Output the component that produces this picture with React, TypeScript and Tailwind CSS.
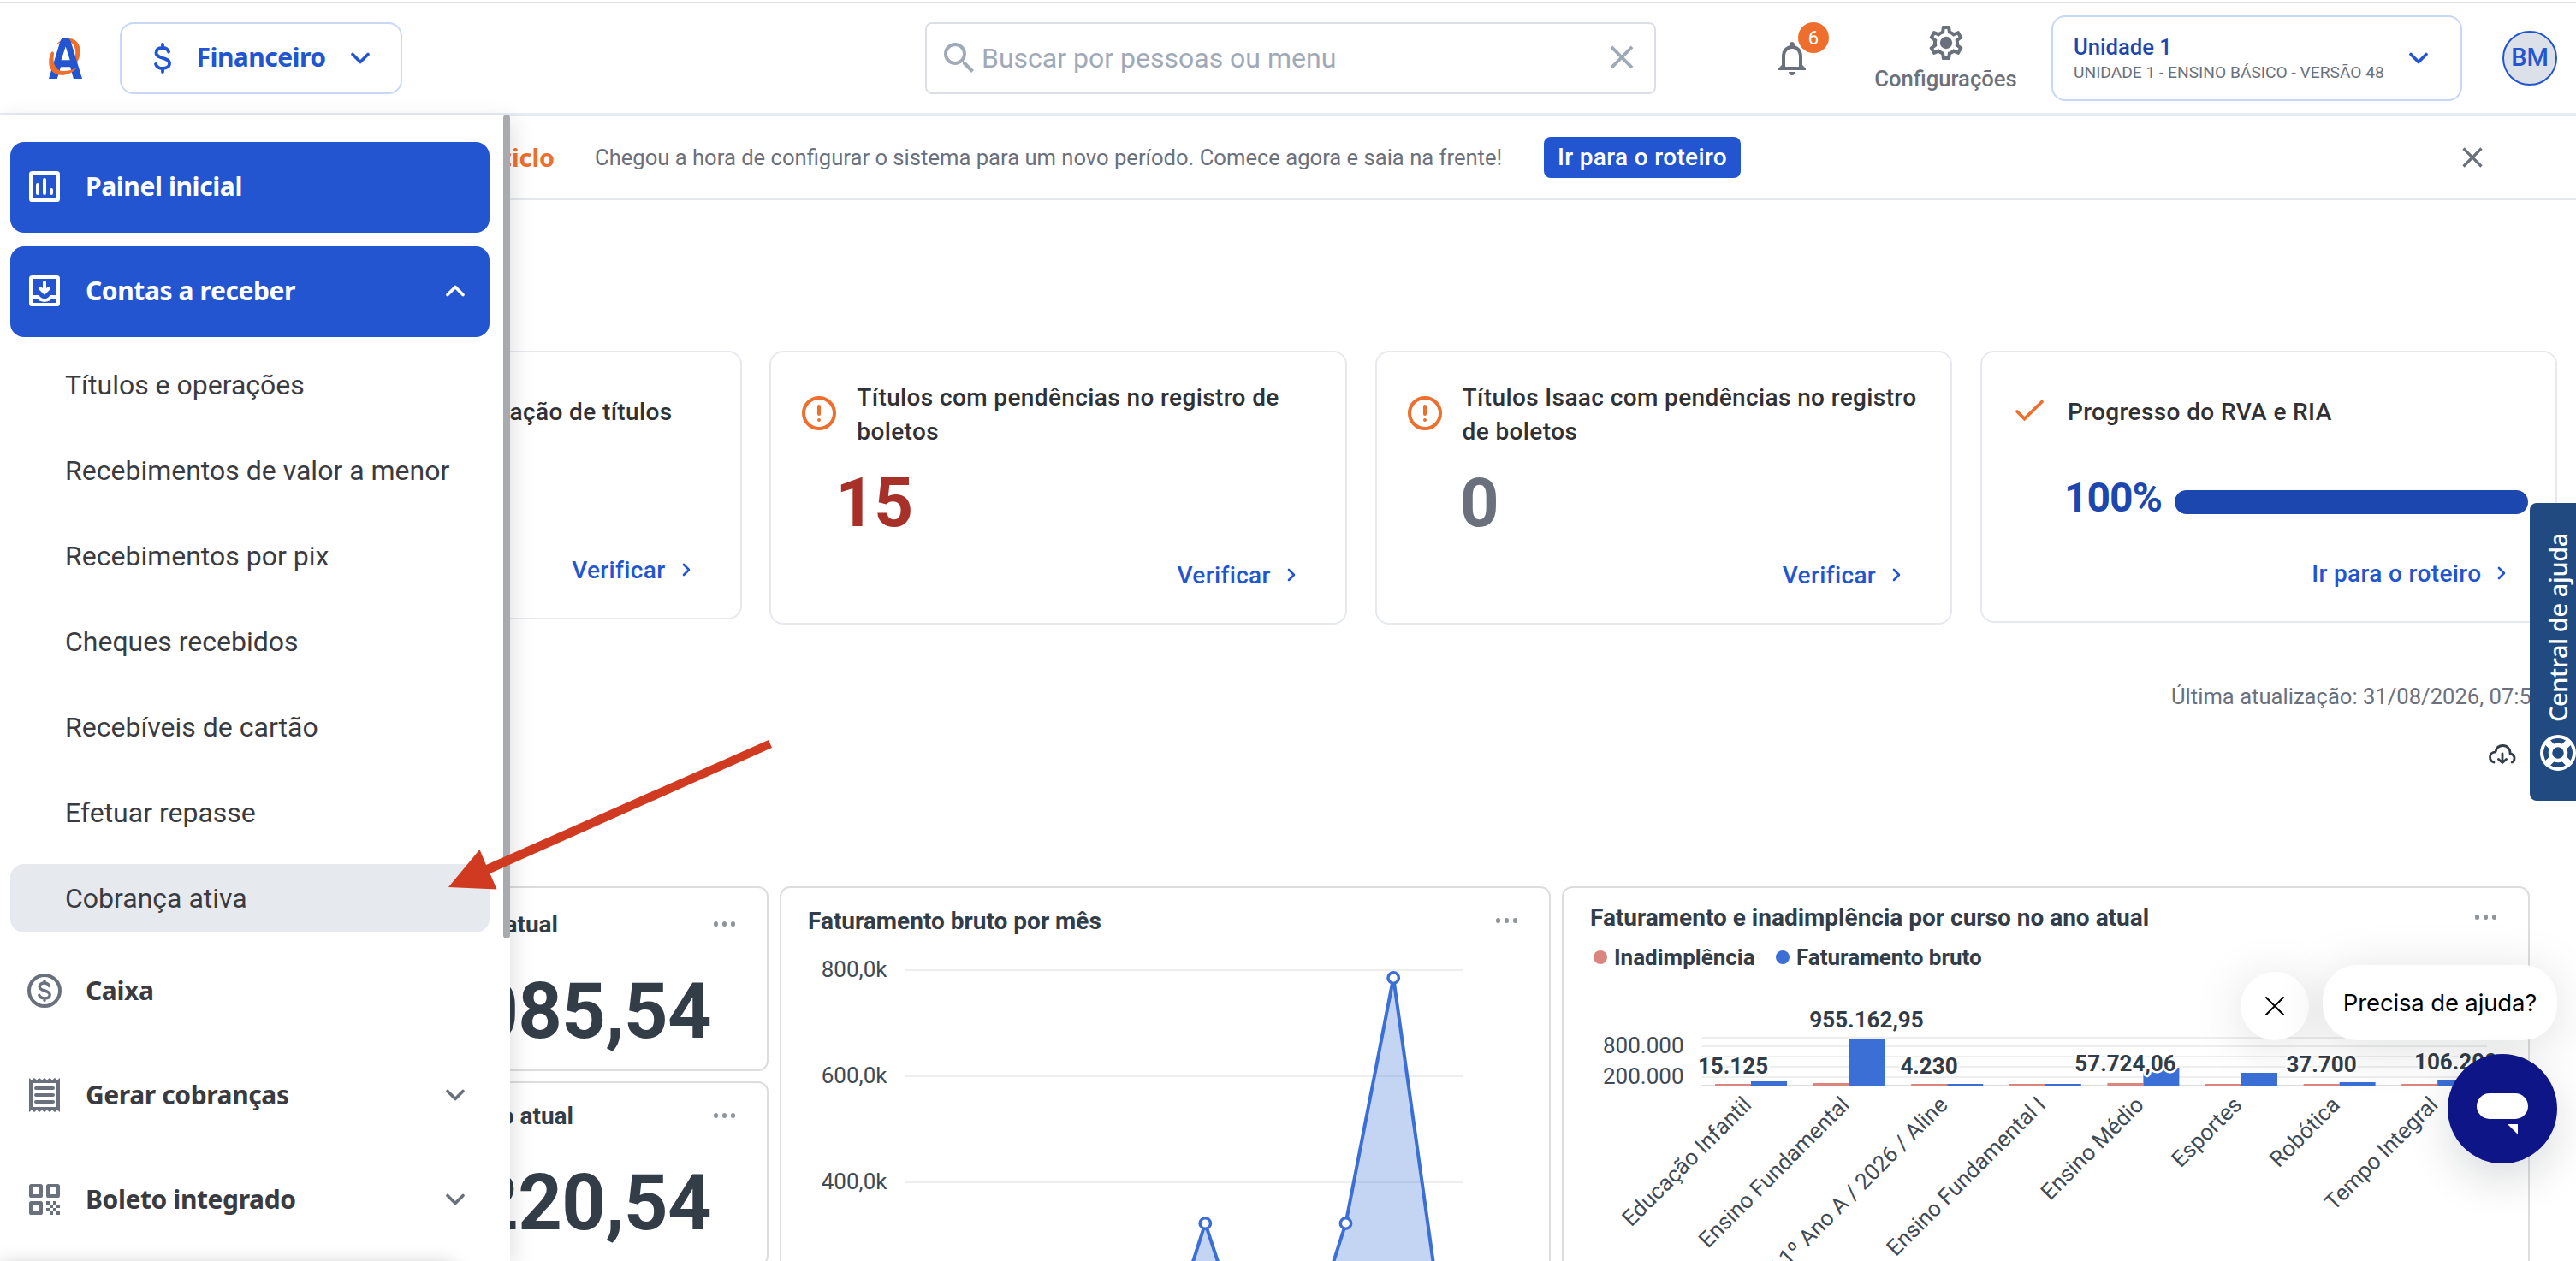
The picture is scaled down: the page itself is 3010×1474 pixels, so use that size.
import React from 'react';
import { MdClose, MdNotificationsNone, MdSearch } from 'react-icons/md';

const SUB_ITEMS = [
  'Títulos e operações',
  'Recebimentos de valor a menor',
  'Recebimentos por pix',
  'Cheques recebidos',
  'Recebíveis de cartão',
  'Efetuar repasse',
  'Cobrança ativa',
];

const MONTHLY = [
  { x: 440.4, y: 506 },
  { x: 495.3, y: 334 },
  { x: 550, y: 500 },
  { x: 604.8, y: 506 },
  { x: 659.5, y: 334 },
  { x: 715.2, y: 47 },
  { x: 770, y: 439 },
];

const COURSES = [
  { name: 'Educação Infantil', overdue: 2, gross: 5, label: '15.125', labelX: 198, labelY: 120 },
  { name: 'Ensino Fundamental', overdue: 3, gross: 54, label: '955.162,95', labelX: 354, labelY: 66 },
  { name: 'Ensino Fundamental / 1º Ano A / 2026 / Aline', overdue: 2, gross: 2, label: '4.230', labelX: 427, labelY: 120 },
  { name: 'Ensino Fundamental I', overdue: 2, gross: 2, label: '', labelX: 0, labelY: 0 },
  { name: 'Ensino Médio', overdue: 3, gross: 21, label: '57.724,06', labelX: 656.5, labelY: 117 },
  { name: 'Esportes', overdue: 2, gross: 15, label: '', labelX: 0, labelY: 0 },
  { name: 'Robótica', overdue: 2, gross: 4, label: '37.700', labelX: 885.5, labelY: 118 },
  { name: 'Tempo Integral', overdue: 2, gross: 6, label: '106.200', labelX: 1042.5, labelY: 115 },
];

const GEAR_PATH =
  'M19.43 12.98c.04-.32.07-.64.07-.98 0-.34-.03-.66-.07-.98l2.11-1.65c.19-.15.24-.42.12-.64l-2-3.46c-.09-.16-.26-.25-.44-.25-.06 0-.12.01-.17.03l-2.49 1c-.52-.4-1.08-.73-1.69-.98l-.38-2.65C14.46 2.18 14.25 2 14 2h-4c-.25 0-.46.18-.49.42l-.38 2.65c-.61.25-1.17.59-1.69.98l-2.49-1c-.06-.02-.12-.03-.18-.03-.17 0-.34.09-.43.25l-2 3.46c-.13.22-.07.49.12.64l2.11 1.65c-.04.32-.07.65-.07.98 0 .33.03.66.07.98l-2.11 1.65c-.19.15-.24.42-.12.64l2 3.46c.09.16.26.25.44.25.06 0 .12-.01.17-.03l2.49-1c.52.4 1.08.73 1.69.98l.38 2.65c.03.24.24.42.49.42h4c.25 0 .46-.18.49-.42l.38-2.65c.61-.25 1.17-.59 1.69-.98l2.49 1c.06.02.12.03.18.03.17 0 .34-.09.43-.25l2-3.46c.12-.22.07-.49-.12-.64l-2.11-1.65zm-1.98-1.71c.04.31.05.52.05.73 0 .21-.02.43-.05.73l-.14 1.13.89.7 1.08.84-.7 1.21-1.27-.51-1.04-.42-.9.68c-.43.32-.84.56-1.25.73l-1.06.43-.16 1.13-.2 1.35h-1.4l-.19-1.35-.16-1.13-1.06-.43c-.43-.18-.83-.41-1.23-.71l-.91-.7-1.06.43-1.27.51-.7-1.21 1.08-.84.89-.7-.14-1.13c-.03-.31-.05-.54-.05-.74s.02-.43.05-.73l.14-1.13-.89-.7-1.08-.84.7-1.21 1.27.51 1.04.42.9-.68c.43-.32.84-.56 1.25-.73l1.06-.43.16-1.13.2-1.35h1.39l.19 1.35.16 1.13 1.06.43c.43.18.83.41 1.23.71l.91.7 1.06-.43 1.27-.51.7 1.21-1.07.85-.89.7.14 1.13z';

const Chevron: React.FC<{ className?: string }> = ({ className = '' }) => (
  <svg viewBox="0 0 24 14" className={`h-[14px] w-[24px] shrink-0 ${className}`} fill="none" stroke="currentColor" strokeWidth="3.6" strokeLinecap="round" strokeLinejoin="round">
    <path d="M3 2.5l9 9 9-9" />
  </svg>
);

const SmallChevron = () => (
  <svg viewBox="0 0 10 16" className="h-4 w-[10px]" fill="none" stroke="currentColor" strokeWidth="2.6" strokeLinecap="round" strokeLinejoin="round">
    <path d="M2 2l6 6-6 6" />
  </svg>
);

const AlertIcon = () => (
  <svg viewBox="0 0 48 48" className="mb-0.5 h-12 w-12 shrink-0" fill="none" stroke="#ee6f2d" strokeWidth="4" strokeLinecap="round">
    <circle cx="24" cy="24" r="18" />
    <path d="M24 16v9M24 32v.1" />
  </svg>
);

const Dots = () => (
  <div className="flex gap-[4.5px]">
    <span className="h-[5.5px] w-[5.5px] rounded-full bg-[#8f959b]" />
    <span className="h-[5.5px] w-[5.5px] rounded-full bg-[#8f959b]" />
    <span className="h-[5.5px] w-[5.5px] rounded-full bg-[#8f959b]" />
  </div>
);

const Logo = () => (
  <svg viewBox="0 0 40 48" className="h-12 w-10 shrink-0">
    <path d="M7.500 9.500C12 3 19 .5 24.500 1c8 .5 12.500 7.500 12.200 16-.2 4.500-1.500 8.500-3.500 11.500l-4-2c2-4 2.300-8 1.800-12-1-6-5-10.500-11-10.500-4.500 0-8.500 2-12.500 5.500z" fill="#ee6f2d" />
    <path d="M0 48L13.300 4.500C14.300 1.500 16.500 0 19.500 0s5.200 1.500 6.200 4.500L39 48H28.900l-3.900-13.700H14L9.800 48zM14.500 26.300h10.200L19.700 10.500z" fill="#2255cf" fillRule="evenodd" />
    <path d="M2.700 17.500c1-1.700 3.300-1 3.300.8 0 3-.8 5.700-.3 9.200.8 6.500 4.300 11 10.300 11.500 6 .3 11-1 16.500-3.500-5 6-12 8.800-19 8.300C5 43.200.2 36.500.2 28.500c0-4 .8-8 2.500-11z" fill="#ee6f2d" />
  </svg>
);

const TopBar = () => (
  <header className="flex h-[130px] items-center border-b-2 border-[#e6edf8] pl-[57px]">
    <Logo />
    <button className="ml-[43px] flex h-[84px] w-[330px] items-center rounded-[16px] border-2 border-[#c7d7f5] pl-[38px] text-[#2255cf]">
      <svg viewBox="0 0 20 36" className="h-9 w-5" fill="none" stroke="currentColor" strokeWidth="3.8" strokeLinecap="round">
        <path d="M10 2v4M10 30v4M17 10.500c-1-3-3.500-4.500-7-4.500-4.500 0-7.500 2-7.500 5.800 0 8 15.500 4.200 15.500 12.500 0 3.700-3.500 5.700-8 5.700-4 0-7-1.800-8-5" />
      </svg>
      <span className="mb-0.5 ml-[29px] w-[152px] whitespace-nowrap font-['Noto_Sans'] text-[30px] leading-[40px] font-bold tracking-[-0.55px]">Financeiro</span>
      <Chevron className="ml-[28px]" />
    </button>
    <div className="ml-[611px] flex h-[84px] w-[854px] items-center rounded-lg border-2 border-[#dce0e6] pl-[14px] text-[#a0a9b8]">
      <MdSearch className="h-12 w-12" />
      <span className="ml-0.5 text-[32px] leading-[40px]">Buscar por pessoas ou menu</span>
      <MdClose className="mr-[15px] mb-0.5 ml-auto h-[46px] w-[46px]" />
    </div>
    <div className="relative ml-[135px] h-12 w-12 text-[#6b717c]">
      <MdNotificationsNone className="h-12 w-12" />
      <span className="absolute -top-[18px] left-[31px] flex h-9 w-9 items-center justify-center rounded-full bg-[#ee6f2d] text-[22px] text-white">6</span>
    </div>
    <div className="mb-0.5 ml-[72px] flex w-[167px] flex-col items-center text-[#6b717c]">
      <svg viewBox="0 0 24 24" className="h-12 w-12" fill="currentColor">
        <path d={GEAR_PATH} />
        <circle cx="12" cy="12" r="3.600" />
      </svg>
      <span className="mt-0.5 text-[25.6px] leading-8 font-medium">Configurações</span>
    </div>
    <div className="ml-[40px] flex h-[100px] w-[480px] shrink-0 items-center rounded-[16px] border-2 border-[#c7d7f5] pl-[24px]">
      <div className="w-[363px] whitespace-nowrap">
        <p className="text-[25.6px] leading-[34px] font-medium text-[#1c47ae]">Unidade 1</p>
        <p className="text-[19.2px] leading-[26px] text-[#6b717c]">UNIDADE 1 - ENSINO BÁSICO - VERSÃO 48</p>
      </div>
      <Chevron className="ml-[28px] text-[#2255cf]" />
    </div>
    <div className="ml-[47px] flex h-16 w-16 shrink-0 items-center justify-center rounded-full border-2 border-[#2255cf] bg-[#dce1e9] text-[29px] font-medium text-[#2255cf]">BM</div>
  </header>
);

const NavItem: React.FC<{ icon: React.ReactNode; label: string; active?: boolean; arrow?: 'up' | 'down' }> = ({ icon, label, active, arrow }) => (
  <div className={`flex h-[106px] items-center rounded-[16px] pb-0.5 pl-4 ${active ? 'bg-[#2255cf] text-white' : 'text-[#6b717c]'}`}>
    {icon}
    <span className={`ml-6 font-['Noto_Sans'] text-[30px] leading-[44px] font-bold tracking-[-0.4px] ${active ? '' : 'text-[#3a3b40]'}`}>{label}</span>
    {arrow && <Chevron className={`mr-[28px] ml-auto ${arrow === 'up' ? 'rotate-180' : ''}`} />}
  </div>
);

const iconProps = { viewBox: '0 0 24 24', className: 'h-12 w-12 shrink-0', fill: 'none', stroke: 'currentColor', strokeLinecap: 'round' as const };

const Sidebar = () => (
  <aside className="absolute top-[134px] left-0 z-10 h-[1340px] w-[596px] overflow-visible bg-white shadow-[4px_6px_24px_rgba(0,0,0,0.12)]">
    <nav className="flex w-[584px] flex-col gap-4 pt-8 pr-3 pl-3">
      <NavItem
        active
        label="Painel inicial"
        icon={
          <svg {...iconProps} strokeWidth="2">
            <rect x="4" y="4" width="16" height="16" rx="0.800" />
            <path d="M8 11v5M12 8v8M16 14v2" />
          </svg>
        }
      />
      <NavItem
        active
        arrow="up"
        label="Contas a receber"
        icon={
          <svg {...iconProps} strokeWidth="2">
            <rect x="4" y="4" width="16" height="16" rx="0.800" />
            <path d="M12 7v5.500M9.500 10.500L12 13l2.500-2.500M4 15.500h4.200c.8 1.200 2.200 2 3.800 2s3-.8 3.800-2H20" />
          </svg>
        }
      />
      <ul className="flex flex-col gap-5">
        {SUB_ITEMS.map(item => (
          <li
            key={item}
            className={`flex h-20 items-center rounded-[16px] pl-16 text-[32px] text-[#3a3b40] ${item === 'Cobrança ativa' ? 'bg-[#e6e9ee]' : ''}`}
          >
            {item}
          </li>
        ))}
      </ul>
      <NavItem
        label="Caixa"
        icon={
          <svg {...iconProps} strokeWidth="2">
            <circle cx="12" cy="12" r="9" />
            <path strokeWidth="1.700" d="M12 6.300v1.200M12 16.500v1.200M14.800 9.300c-.5-1.200-1.500-1.800-2.800-1.800-1.700 0-2.900.8-2.900 2.100 0 3.100 6 1.700 6 4.800 0 1.400-1.400 2.100-3.100 2.100-1.500 0-2.600-.7-3.100-1.900" />
          </svg>
        }
      />
      <NavItem
        arrow="down"
        label="Gerar cobranças"
        icon={
          <svg {...iconProps} strokeWidth="2">
            <path d="M4 4v16M20 4v16M4 4h16M4 20h16" strokeLinecap="butt" />
            <path d="M3 5V2l1.500 1.200L6 2l1.500 1.200L9 2l1.500 1.200L12 2l1.500 1.200L15 2l1.500 1.200L18 2l1.500 1.200L21 2v3zM3 19v3l1.500-1.200L6 22l1.500-1.200L9 22l1.500-1.200L12 22l1.500-1.200L15 22l1.500-1.200L18 22l1.500-1.200L21 22v-3z" fill="currentColor" stroke="none" />
            <path d="M7 8h10M7 12h10M7 16h10" />
          </svg>
        }
      />
      <NavItem
        arrow="down"
        label="Boleto integrado"
        icon={
          <svg {...iconProps} strokeWidth="2">
            <rect x="4" y="4" width="6" height="6" rx="0.300" />
            <rect x="14" y="4" width="6" height="6" rx="0.300" />
            <rect x="4" y="14" width="6" height="6" rx="0.300" />
            <path
              fill="currentColor"
              stroke="none"
              d="M13 13h2v2h-2zM17 13h2v2h-2zM15 15h2v2h-2zM19 15h2v2h-2zM13 17h2v2h-2zM17 17h2v2h-2zM15 19h2v2h-2zM19 19h2v2h-2z"
            />
          </svg>
        }
      />
    </nav>
    <div className="absolute top-0 right-0 h-[963px] w-2 rounded-full bg-[#a9aaad]" />
    <div className="absolute bottom-0 left-0 h-[24px] w-[560px] overflow-hidden">
      <div className="mt-[28px] h-10 w-[530px] shadow-[0_0_22px_rgba(0,0,0,0.22)]" />
    </div>
  </aside>
);

const Banner = () => (
  <div className="flex h-[100px] items-center border-y-2 border-[#e5e9ee]">
    <span className="w-[648px] text-right font-['Noto_Sans'] text-[29px] font-bold tracking-[-0.1px] text-[#ee6f2d]">Novo ciclo</span>
    <span className="ml-[47px] w-[1062px] text-[25.6px] whitespace-nowrap text-[#6b717c]">
      Chegou a hora de configurar o sistema para um novo período. Comece agora e saia na frente!
    </span>
    <button className="ml-[47px] h-12 w-[230px] rounded-lg bg-[#2255cf] text-[28px] leading-[48px] font-medium tracking-[0.35px] whitespace-nowrap text-white">
      Ir para o roteiro
    </button>
    <MdClose className="mr-[101px] ml-auto h-10 w-10 text-[#6b717c]" />
  </div>
);

interface StatusCardProps {
  icon: React.ReactNode;
  title: string;
  tall?: boolean;
  link: string;
  children?: React.ReactNode;
}

const StatusCard: React.FC<StatusCardProps> = ({ icon, title, tall, link, children }) => (
  <div className="flex w-[674.5px] shrink-0 flex-col rounded-[16px] border-2 border-[#e6e9ee] pt-8 pb-9 pl-8">
    <div className={`flex items-center ${tall ? 'h-20' : 'h-[74px]'}`}>
      {icon}
      <h3 className="ml-5 w-[550px] pt-0.5 text-[28px] leading-10 font-medium tracking-[0.38px] text-[#303134]">{title}</h3>
    </div>
    <div className="mt-6">{children}</div>
    <a className="mt-6 flex h-10 items-center justify-end gap-[19px] pr-[58px] text-[28px] leading-10 font-medium tracking-[0.35px] text-[#2255cf]">
      <span className="pt-px">{link}</span>
      <SmallChevron />
    </a>
  </div>
);

const StatusCards = () => (
  <section className="mt-[176px] flex h-[320px] items-start gap-[32.8px] pl-[192px]">
    <StatusCard icon={<AlertIcon />} title="Pendência em renegociação de títulos" link="Verificar">
      <div className="h-20" />
    </StatusCard>
    <StatusCard icon={<AlertIcon />} title="Títulos com pendências no registro de boletos" tall link="Verificar">
      <p className="ml-[39px] w-[98px] text-center text-[80px] leading-[80px] font-bold tracking-[-0.8px] text-[#a73028]">15</p>
    </StatusCard>
    <StatusCard icon={<AlertIcon />} title="Títulos Isaac com pendências no registro de boletos" tall link="Verificar">
      <p className="ml-[39px] w-[98px] text-center text-[80px] leading-[80px] font-bold text-[#6b717c]">0</p>
    </StatusCard>
    <StatusCard
      icon={
        <svg viewBox="0 0 48 48" className="h-12 w-12 shrink-0" fill="none" stroke="#ee6f2d" strokeWidth="3.800" strokeLinecap="round">
          <path d="M9 24l8.500 8.500L38 12.500" />
        </svg>
      }
      title="Progresso do RVA e RIA"
      link="Ir para o roteiro"
    >
      <div className="flex h-[84px] items-center pl-[64px]">
        <span className="w-[116px] pb-1 text-[48px] leading-[80px] font-bold tracking-[-1px] text-[#1c47ae]">100%</span>
        <div className="mt-[6px] ml-[13px] h-7 w-[413px] rounded-[14px] bg-[#1c47ae]" />
      </div>
    </StatusCard>
  </section>
);

const MonthlyChart = () => {
  const line = MONTHLY.map(p => `${p.x},${p.y}`).join(' ');
  return (
    <svg viewBox="0 0 897 384" className="h-[384px] w-[897px]">
      {['800,0k', '600,0k', '400,0k'].map((label, i) => (
        <g key={label}>
          <line x1="144.500" x2="796.500" y1={38 + i * 124} y2={38 + i * 124} stroke="#eeeeee" strokeWidth="2" />
          <text x="123.500" y={46 + i * 124} textAnchor="end" fontSize="26" fill="#3f4a54">
            {label}
          </text>
        </g>
      ))}
      <polygon points={`440,560 ${line} 770,560`} fill="#3b6fd6" fillOpacity="0.300" />
      <polyline points={line} fill="none" stroke="#3b6fd6" strokeWidth="4" />
      {MONTHLY.map(p => (
        <circle key={p.x} cx={p.x} cy={p.y} r="6.200" fill="#fff" stroke="#3b6fd6" strokeWidth="3.500" />
      ))}
    </svg>
  );
};

const CourseChart = () => (
  <svg viewBox="0 0 1127 345" className="h-[345px] w-[1127px] overflow-hidden">
    {[78, 88, 100, 112, 124].map(y => (
      <line key={y} x1="161.500" x2="1079" y1={y} y2={y} stroke="#eeeeee" strokeWidth="2" />
    ))}
    <line x1="161.500" x2="1079" y1="134" y2="134" stroke="#dcdcdc" strokeWidth="2" />
    <text x="140.500" y="96" textAnchor="end" fontSize="26" fill="#3f4a54">800.000</text>
    <text x="140.500" y="132" textAnchor="end" fontSize="26" fill="#3f4a54">200.000</text>
    {COURSES.map((c, i) => {
      const x = 177 + i * 114.6;
      return (
        <g key={c.name}>
          <rect x={x} y={134 - c.overdue} width="42" height={c.overdue + 0.5} fill="#db857f" />
          <rect x={x + 42} y={134 - c.gross} width="42" height={c.gross + 0.5} fill="#3b6fd6" />
          <text transform={`translate(${x + 44} 158) rotate(-45)`} textAnchor="end" fontSize="26" fill="#3f4a54">
            {c.name}
          </text>
        </g>
      );
    })}
    {COURSES.filter(c => c.label).map(c => (
      <text key={c.name} x={c.labelX} y={c.labelY} textAnchor="middle" fontSize="26" fontWeight="700" fill="#323d47" stroke="#fff" strokeWidth="5" paintOrder="stroke" strokeLinejoin="round">
        {c.label}
      </text>
    ))}
  </svg>
);

const StatTile: React.FC<{ title: string; value: string; titleClass: string; className: string }> = ({ title, value, titleClass, className }) => (
  <div className={`h-[216px] w-[598px] shrink-0 rounded-xl border-2 border-[#dddddd] bg-white ${className}`}>
    <div className="flex h-10 items-center">
      <h3 className={`pt-0.5 text-right text-[28px] leading-10 font-bold ${titleClass}`}>{title}</h3>
      <div className="mr-[37px] ml-auto">
        <Dots />
      </div>
    </div>
    <p className="mt-[38px] pr-[65px] text-right text-[90px] leading-[90px] font-bold tracking-[-0.6px]">{value}</p>
  </div>
);

const Dashboards = () => (
  <section className="mt-[135px] flex h-[438px] gap-[13px] overflow-hidden pl-[300px] text-[#323d47]">
    <div className="flex shrink-0 flex-col gap-3">
      <StatTile title="Faturamento no mês atual" value="1.085,54" titleClass="w-[350px]" className="pt-[22px]" />
      <StatTile title="Faturamento no ano atual" value="9.220,54" titleClass="w-[368px]" className="pt-[18px]" />
    </div>
    <div className="h-[480px] w-[901px] shrink-0 rounded-xl border-2 border-[#dddddd] pt-[18px]">
      <div className="flex h-10 items-center pr-[37px] pl-[31px]">
        <h3 className="pt-0.5 text-[28px] leading-10 font-bold">Faturamento bruto por mês</h3>
        <div className="ml-auto">
          <Dots />
        </div>
      </div>
      <MonthlyChart />
    </div>
    <div className="h-[480px] w-[1131px] shrink-0 rounded-xl border-2 border-[#dddddd] pt-[14px]">
      <div className="flex h-10 items-center pr-[37px] pl-[31px]">
        <h3 className="pt-px text-[28px] leading-10 font-bold">Faturamento e inadimplência por curso no ano atual</h3>
        <div className="ml-auto">
          <Dots />
        </div>
      </div>
      <div className="mt-[11px] flex h-8 items-center pl-[35px] text-[26px] leading-8 font-bold">
        <span className="h-4 w-4 rounded-full bg-[#db857f]" />
        <span className="ml-[8px] w-[165px]">Inadimplência</span>
        <span className="ml-[24px] h-4 w-4 rounded-full bg-[#3b6fd6]" />
        <span className="ml-[8px]">Faturamento bruto</span>
      </div>
      <CourseChart />
    </div>
  </section>
);

const HelpTab = () => (
  <div className="absolute top-[588px] right-0 z-10 flex h-[348px] w-[54px] flex-col items-center rounded-l-lg bg-[#214a80] pt-[33px] pl-[12px] text-white">
    <span className="h-[223px] rotate-180 font-['Noto_Sans'] text-[29px] leading-[42px] font-medium tracking-[-0.4px] whitespace-nowrap [writing-mode:vertical-rl]">
      Central de ajuda
    </span>
    <svg viewBox="0 0 42 42" className="mt-[15px] h-[42px] w-[42px] shrink-0" fill="none" stroke="currentColor">
      <circle cx="21" cy="21" r="19" strokeWidth="4" />
      <circle cx="21" cy="21" r="9" strokeWidth="4.500" />
      <path d="M8 8l7 7M34 8l-7 7M8 34l7-7M34 34l-7-7" strokeWidth="8" />
    </svg>
  </div>
);

const ChatWidget = () => (
  <div className="absolute top-[1128px] right-[22px] z-20 flex flex-col items-end gap-4">
    <div className="flex items-end gap-4">
      <div className="flex h-20 w-20 items-center justify-center rounded-full bg-white shadow-[0_8px_60px_rgba(0,18,26,0.13)]">
        <svg viewBox="0 0 24 24" className="h-6 w-6" stroke="#000" strokeWidth="2" strokeLinecap="round">
          <path d="M2 2l20 20M22 2L2 22" />
        </svg>
      </div>
      <div className="flex h-[88px] w-[274px] items-center justify-center rounded-[40px] bg-white pt-0.5 font-['Inter'] text-[27.5px] tracking-[-0.15px] whitespace-nowrap text-black shadow-[0_8px_60px_rgba(0,18,26,0.13)]">
        Precisa de ajuda?
      </div>
    </div>
    <div className="h-32 w-32 rounded-full bg-[#0e1587] shadow-[0_20px_50px_rgba(0,18,26,0.14)]">
      <svg viewBox="0 0 128 128" className="h-32 w-32" fill="#fff">
        <rect x="34" y="46" width="60" height="30" rx="15" />
        <path d="M70 82h12v12z" />
      </svg>
    </div>
  </div>
);

const App: React.FC = () => {
  return (
    <div className="relative h-[1474px] w-[3010px] overflow-hidden border-t-2 border-white bg-white font-['Roboto',sans-serif]">
      <div className="h-0.5 bg-[#e0e0e0]" />
      <TopBar />
      <main>
        <Banner />
        <StatusCards />
        <p className="mt-[68px] pl-[2537px] text-[25.6px] leading-8 whitespace-nowrap text-[#6b717c]">Última atualização: 31/08/2026, 07:55</p>
        <div className="mt-[31px] flex h-10 items-center justify-end pr-[70px]">
          <svg viewBox="0 0 32 24" className="h-6 w-8" fill="none" stroke="#323d47" strokeWidth="2.800" strokeLinecap="round" strokeLinejoin="round">
            <path d="M6 22c-3-1-4.500-3.500-4.500-6C1.500 12.500 4 10 8 9.800 9 5 12.500 2.500 16.500 2.500c5 0 9 4 8.500 9.500 3 .5 5 2.800 5 5.500 0 2-1 3.800-2.800 4.500" />
            <path d="M16 12v10M11.500 18.500L16 22.500l4.500-4" />
          </svg>
        </div>
        <Dashboards />
      </main>
      <div className="absolute inset-0 -top-0.5">
        <Sidebar />
        <HelpTab />
        <ChatWidget />
        {/* pointer to the highlighted menu entry */}
        <svg viewBox="0 0 390 180" className="absolute top-[865px] left-[520px] z-20 h-[180px] w-[390px]" fill="#d03a20">
          <path d="M4 172l36.500-44 7.500 18L378 0l4 9L52.500 156l8 18.500z" />
        </svg>
      </div>
    </div>
  );
};

export default App;
